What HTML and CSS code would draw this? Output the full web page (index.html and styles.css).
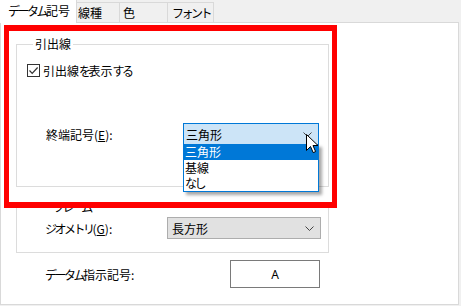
FILE: index.html
```html
<!DOCTYPE html>
<html lang="ja">
<head>
<meta charset="utf-8">
<link rel="stylesheet" href="styles.css">
</head>
<body>
<div class="tabs">
  <div class="tab active"><span class="k">データム</span>記号</div>
  <div class="tab t2">線種</div>
  <div class="tab t3">色</div>
  <div class="tab t4"><span class="k">フォント</span></div>
</div>
<div class="panel">
  <fieldset class="group g1">
    <legend>引出線</legend>
    <label class="check-row">
      <span class="checkbox"><svg width="11" height="11" viewBox="0 0 11 11"><polyline points="1.5,5.5 4.2,8.3 9.6,2.5" fill="none" stroke="#333" stroke-width="1.2"/></svg></span>
      <span>引出線<span class="k">を</span>表示<span class="k">する</span></span>
    </label>
    <div class="field-row r1">
      <span class="label">終端記号(<u>E</u>):</span>
      <div class="combo focused">
        <span>三角形</span>
        <svg class="chev" width="9" height="5" viewBox="0 0 9 5"><polyline points="0.5,0.5 4.5,4.5 8.5,0.5" fill="none" stroke="#444" stroke-width="1"/></svg>
      </div>
    </div>
  </fieldset>
  <fieldset class="group g2">
    <legend><span class="k">フレーム</span></legend>
    <div class="field-row r2">
      <span class="label"><span class="k">ジオメトリ</span>(<u>G</u>):</span>
      <div class="combo plain">
        <span>長方形</span>
        <svg class="chev" width="9" height="5" viewBox="0 0 9 5"><polyline points="0.5,0.5 4.5,4.5 8.5,0.5" fill="none" stroke="#444" stroke-width="1"/></svg>
      </div>
    </div>
  </fieldset>
  <div class="field-row r3">
    <span class="label"><span class="k">データム</span>指示記号:</span>
    <div class="textbox">A</div>
  </div>
</div>

<div class="highlight"></div>
<ul class="droplist">
  <li class="sel">三角形</li>
  <li>基線</li>
  <li><span class="k">なし</span></li>
</ul>
<svg class="cursor" width="13" height="20" viewBox="0 0 13 20"><path d="M0.5,0.5 L0.5,16.5 L4.5,12.5 L7.2,18.6 L9.6,17.6 L7,11.5 L12,11.5 Z" fill="#fff" stroke="#000" stroke-width="1" stroke-linejoin="miter"/></svg>
</body>
</html>
```

FILE: styles.css
```css
* { box-sizing: border-box; }
html, body { margin: 0; padding: 0; }
body {
  width: 461px;
  height: 306px;
  background: #f0f0f0;
  font-family: "Noto Sans CJK JP", sans-serif;
  font-size: 12px;
  color: #000;
  position: relative;
  overflow: hidden;
}
.k { letter-spacing: -2.5px; }
.tabs {
  display: flex;
  align-items: flex-end;
  height: 22px;
  position: relative;
  z-index: 2;
}
.tab {
  height: 20px;
  line-height: 19px;
  background: #f0f0f0;
  border: 1px solid #d9d9d9;
  border-bottom: none;
  border-left: none;
  white-space: nowrap;
}
.tab.active {
  width: 77px;
  height: 23px;
  margin-bottom: -1px;
  background: #fff;
  padding-left: 8px;
  line-height: 22px;
  border-top: none;
}
.t2 { width: 43px; padding-left: 1px; }
.t3 { width: 48px; padding-left: 3px; }
.t4 { width: 46px; padding-left: 4px; }

.panel {
  width: 459px;
  height: 283px;
  background: #fff;
  border: 1px solid #d9d9d9;
  padding: 14px 0 0 15px;
}
.group {
  margin: 0;
  padding: 0;
  border: 1px solid #dcdcdc;
  width: 313px;
  min-width: 0;
}
.group legend {
  margin-left: 6px;
  padding: 0 2px;
  line-height: 14px;
  height: 14px;
}
.g1 { padding: 11px 0 41px 10px; }
.g2 { margin-top: 13px; padding: 3px 0 13px 28px; }

.check-row {
  display: flex;
  align-items: center;
  height: 16px;
  gap: 3px;
}
.checkbox {
  width: 13px;
  height: 13px;
  border: 1px solid #333;
  display: flex;
  align-items: center;
  justify-content: center;
}
.checkbox svg { display: block; }

.field-row {
  display: flex;
  align-items: center;
}
.r1 { margin-top: 45px; padding-left: 19px; }
.r1 .label { width: 137px; }
.r2 .label { width: 122px; }
.label { white-space: nowrap; }

.combo {
  height: 22px;
  display: flex;
  align-items: center;
  justify-content: space-between;
  padding: 0 6px 0 2px;
}
.combo .chev { display: block; }
.combo.focused {
  width: 136px;
  background: #cce4f7;
  border: 1px solid #0078d7;
}
.combo.plain {
  width: 154px;
  background: #e1e1e1;
  border: 1px solid #adadad;
  padding-left: 4px;
}

.r3 { margin-top: 7px; padding-left: 29px; }
.r3 .label { width: 185px; }
.textbox {
  width: 90px;
  height: 28px;
  border: 1px solid #7a7a7a;
  display: flex;
  align-items: center;
  justify-content: center;
  font-family: "Noto Sans", sans-serif;
  font-size: 12px;
}

.highlight {
  position: absolute;
  left: 4px;
  top: 25px;
  width: 333px;
  height: 183px;
  border-style: solid;
  border-color: #ff0000;
  border-width: 6px 5px;
  z-index: 5;
}
.droplist {
  position: absolute;
  left: 183px;
  top: 144px;
  width: 136px;
  height: 48px;
  margin: 0;
  padding: 0;
  list-style: none;
  background: #fff;
  border: 1px solid #0078d7;
  border-top: none;
  box-shadow: 3px 3px 3px rgba(0,0,0,0.35);
  z-index: 4;
}
.droplist li {
  height: 15.6px;
  line-height: 15px;
  padding-left: 1px;
}
.droplist li.sel {
  background: #0078d7;
  color: #fff;
}
.cursor {
  position: absolute;
  left: 306px;
  top: 134px;
  z-index: 6;
}
```
